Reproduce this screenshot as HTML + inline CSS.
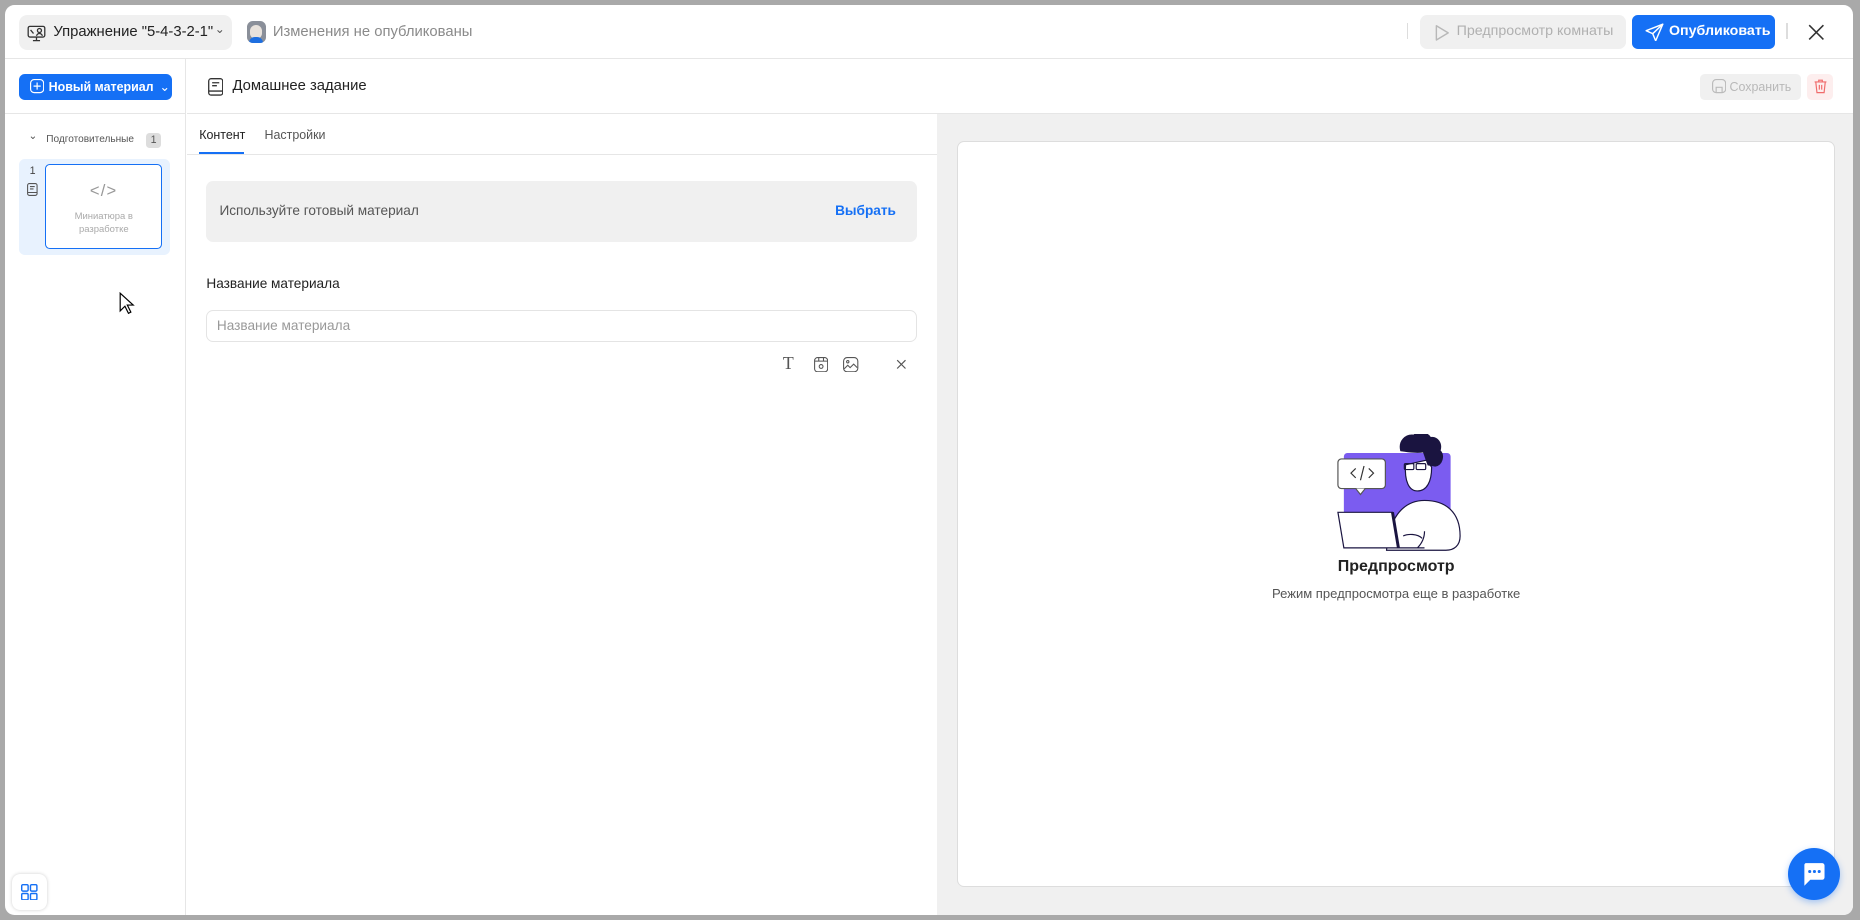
<!DOCTYPE html>
<html><head><meta charset="utf-8"><style>
*{box-sizing:border-box;margin:0;padding:0}
html,body{width:1860px;height:920px;overflow:hidden;background:#a9a9a9}
#root{zoom:1.18622;width:1568px;height:776px;position:relative;font-family:"Liberation Sans","Noto Sans CJK SC",sans-serif;color:#222}
#root div{white-space:nowrap}
.win{position:absolute;left:4px;top:4px;width:1558px;height:767px;background:#fff;border-radius:8px;overflow:hidden}
.abs{position:absolute}
.hdr{left:0;top:0;width:1558px;height:46px;border-bottom:1px solid #e6e6e6}
.pill{left:12px;top:9px;width:180px;height:29px;background:#f0f0f0;border-radius:7px;font-size:12.5px;line-height:29px;padding-left:29px}
.side{left:0;top:46px;width:153px;height:721px;border-right:1px solid #e6e6e6}
.btn{border-radius:5px;font-size:10.5px;font-weight:bold;color:#fff;background:#1570f5}
</style></head><body><div id="root">
<div class="win">
 <div class="abs hdr">
  <div class="abs pill">
   <svg class="abs" style="left:7px;top:7px" width="16" height="16" viewBox="0 0 16 16" fill="none" stroke="#333" stroke-width="1.1"><rect x="1" y="2" width="14" height="9" rx="1.5"/><path d="M8 11v3M5 14h6"/><circle cx="10.5" cy="5.5" r="1.7"/><path d="M8 10c.5-1.5 1.5-2 2.5-2s2 .5 2.5 2"/><path d="M3 5l2.5 3"/></svg>
   Упражнение "5-4-3-2-1"<span style="position:absolute;left:165px;top:-3px;font-size:10px;color:#555">⌄</span>
  </div>
  <div class="abs" style="left:204px;top:14px;width:16px;height:18px;border-radius:5px;background:#8a8f99;overflow:hidden"><div style="position:absolute;left:3px;top:3px;width:10px;height:12px;border-radius:5px;background:#e8e2dc"></div><div style="position:absolute;left:2px;top:13px;width:12px;height:6px;border-radius:5px 5px 0 0;background:#1e6fe0"></div></div>
  <div class="abs" style="left:226px;top:16px;font-size:12.5px;color:#8a8a8a">Изменения не опубликованы</div>
  <div class="abs" style="left:1182px;top:15px;width:1px;height:14px;background:#ddd"></div>
  <div class="abs" style="left:1193px;top:9px;width:174px;height:28px;background:#f0f0f0;border-radius:6px;font-size:12px;color:#b0b0b0;line-height:28px;padding-left:31px">Предпросмотр комнаты
   <svg class="abs" style="left:12px;top:7px" width="14" height="15" viewBox="0 0 14 15" fill="none" stroke="#b8b8b8" stroke-width="1.2"><path d="M2 1.5v12l10-6z" stroke-linejoin="round"/></svg></div>
  <div class="abs btn" style="left:1372px;top:9px;width:120px;height:28px;font-size:12px;line-height:28px;padding-left:31px">Опубликовать
   <svg class="abs" style="left:11px;top:6px" width="16" height="16" viewBox="0 0 16 16" fill="none" stroke="#fff" stroke-width="1.2" stroke-linejoin="round"><path d="M15 1L1 6.5l5.5 2.5L9 15z"/><path d="M6.5 9L15 1"/></svg></div>
  <div class="abs" style="left:1502px;top:15px;width:1px;height:14px;background:#ddd"></div>
  <svg class="abs" style="left:1520px;top:16px" width="14" height="14" viewBox="0 0 14 14" stroke="#333" stroke-width="1.3"><path d="M1 1l12 12M13 1L1 13"/></svg>
 </div>
 <div class="abs side">
  <div class="abs" style="left:0;top:45px;width:153px;height:1px;background:#e6e6e6"></div>
  <div class="abs btn" style="left:12px;top:12px;width:129px;height:22px;line-height:22px;padding-left:25px">Новый материал<span style="font-weight:normal;margin-left:5px">⌄</span>
   <svg class="abs" style="left:9px;top:5px" width="12" height="12" viewBox="0 0 12 12" fill="none" stroke="#fff" stroke-width="1"><rect x=".5" y=".5" width="11" height="11" rx="3"/><path d="M6 3v6M3 6h6"/></svg></div>
  <div class="abs" style="left:20px;top:59px;font-size:9px;color:#555">⌄</div>
  <div class="abs" style="left:35px;top:63px;font-size:8.5px;color:#555">Подготовительные</div>
  <div class="abs" style="left:119px;top:62px;width:13px;height:13px;border-radius:3px;background:#ddd;font-size:9px;text-align:center;line-height:13px;color:#555">1</div>
  <div class="abs" style="left:12px;top:84px;width:127px;height:81px;background:#e8f2fe;border-radius:5px"></div>
  <div class="abs" style="left:21px;top:89px;font-size:9px;color:#444">1</div>
  <svg class="abs" style="left:19px;top:104px" width="9" height="11" viewBox="0 0 9 11" fill="none" stroke="#555" stroke-width=".9"><rect x=".5" y=".5" width="8" height="10" rx="1.5"/><path d="M2.5 3h4M2.5 5h3M.5 8h8"/></svg>
  <div class="abs" style="left:34px;top:88px;width:99px;height:72px;border:1px solid #1570f5;border-radius:4px;background:#fff;text-align:center;font-size:8px;color:#aaa;line-height:11px;padding-top:38px">Миниатюра в<br>разработке
   <div class="abs" style="left:0;top:16px;width:97px;text-align:center;font-size:14px;color:#999;letter-spacing:1px">&lt;/&gt;</div></div>
  <svg class="abs" style="left:96px;top:196px" width="14" height="20" viewBox="0 0 14 20"><path d="M1 1v15l4-4 3 6 2-1-3-6h5z" fill="#fff" stroke="#000" stroke-width="1"/></svg>
  <div class="abs" style="left:6px;top:687px;width:30px;height:30px;border-radius:7px;background:#fff;box-shadow:0 0 3px rgba(0,0,0,.2)">
   <svg class="abs" style="left:8px;top:8px" width="14" height="14" viewBox="0 0 14 14" fill="none" stroke="#1570f5" stroke-width="1.2"><rect x=".6" y=".6" width="5.4" height="5.4" rx="1"/><rect x="8" y=".6" width="5.4" height="5.4" rx="1"/><rect x=".6" y="8" width="5.4" height="5.4" rx="1"/><rect x="8" y="8" width="5.4" height="5.4" rx="1"/></svg></div>
 </div>
 <div class="abs" style="left:154px;top:91px;width:1404px;height:1px;background:#e6e6e6"></div>
 <svg class="abs" style="left:171px;top:62px" width="13" height="15" viewBox="0 0 13 15" fill="none" stroke="#333" stroke-width="1.1"><rect x=".6" y=".6" width="11.8" height="13.8" rx="2"/><path d="M3.5 4h6M3.5 6.5h4M.6 11h11.8"/></svg>
 <div class="abs" style="left:192px;top:62px;font-size:12.5px;color:#222">Домашнее задание</div>
 <div class="abs" style="left:1429px;top:58px;width:85px;height:22px;border-radius:4px;background:#f0f0f0;font-size:10.5px;color:#b8b8b8;line-height:22px;padding-left:25px">Сохранить
  <svg class="abs" style="left:10px;top:5px" width="12" height="12" viewBox="0 0 12 12" fill="none" stroke="#bbb" stroke-width="1"><rect x=".5" y=".5" width="11" height="11" rx="3"/><path d="M3.5 11.5V7h5v4.5"/></svg></div>
 <div class="abs" style="left:1519px;top:58px;width:22px;height:22px;border-radius:4px;background:#fdeeee">
  <svg class="abs" style="left:6px;top:5px" width="11" height="12" viewBox="0 0 11 12" fill="none" stroke="#f06b6b" stroke-width="1"><path d="M.5 2.5h10M4 2.5V1h3v1.5M1.5 2.5l1 9h6l1-9M4.5 5v4M6.5 5v4"/></svg></div>
 <div class="abs" style="left:164px;top:104px;font-size:10.5px;color:#222">Контент</div>
 <div class="abs" style="left:164px;top:124px;width:38px;height:2px;background:#1570f5"></div>
 <div class="abs" style="left:219px;top:104px;font-size:10.5px;color:#555">Настройки</div>
 <div class="abs" style="left:154px;top:126px;width:632px;height:1px;background:#e6e6e6"></div>
 <div class="abs" style="left:170px;top:149px;width:599px;height:51px;border-radius:6px;background:#f0f0f0"></div>
 <div class="abs" style="left:181px;top:167px;font-size:11.5px;color:#555">Используйте готовый материал</div>
 <div class="abs" style="left:700px;top:167px;font-size:11.5px;color:#1570f5;font-weight:bold">Выбрать</div>
 <div class="abs" style="left:170px;top:229px;font-size:11.5px;color:#222">Название материала</div>
 <div class="abs" style="left:170px;top:257px;width:599px;height:27px;border:1px solid #e4e4e4;border-radius:6px;font-size:11.5px;color:#999;line-height:25px;padding-left:8px">Название материала</div>
 <div class="abs" style="left:656px;top:294px;font-size:15px;color:#555;font-family:'Liberation Serif',serif">T</div>
 <svg class="abs" style="left:682px;top:297px" width="12" height="13" viewBox="0 0 12 13" fill="none" stroke="#555" stroke-width=".9"><rect x=".5" y=".5" width="11" height="12" rx="2.5"/><path d="M.5 3.5h11M4 .5v3M8 .5v3"/><circle cx="6" cy="8" r="1.6"/></svg>
 <svg class="abs" style="left:707px;top:297px" width="13" height="13" viewBox="0 0 13 13" fill="none" stroke="#555" stroke-width=".9"><rect x=".5" y=".5" width="12" height="12" rx="3"/><circle cx="4" cy="4" r="1"/><path d="M1 10l3-3 2 2 3-3 3 3"/></svg>
 <svg class="abs" style="left:751px;top:299px" width="9" height="9" viewBox="0 0 9 9" stroke="#555" stroke-width="1"><path d="M1 1l7 7M8 1L1 8"/></svg>
 <div class="abs" style="left:786px;top:92px;width:772px;height:675px;background:#f0f0f0"></div>
 <div class="abs" style="left:803px;top:115px;width:740px;height:629px;background:#fff;border:1px solid #ddd;border-radius:6px"></div>
 <svg class="abs" style="left:1119px;top:362px" width="110" height="100" viewBox="0 0 110 100" fill="none" stroke="#1a1440" stroke-width="1">
  <rect x="10" y="16" width="90" height="60" rx="3" fill="#7b5cf0" stroke="none"/>
  <rect x="5" y="21" width="40" height="25" rx="3" fill="#fff" stroke="#555"/><path d="M20 46l4 5 4-5" fill="#fff" stroke="#555"/>
  <path d="M20 29l-4 4 4 4M31 29l4 4-4 4M27 27l-3 12" stroke="#333"/>
  <path d="M46 98c2-30 16-42 32-42 18 0 30 10 30 30 0 8-5 12-12 12z" fill="#fff"/>
  <path d="M62 26c-1 14 3 22 10 22 8 0 12-8 12-20l-4-6z" fill="#fff"/>
  <path d="M58 14c-2-8 4-14 11-13 3-3 11-3 14 2 6-1 10 5 8 11 4 4 2 12-4 13l-6-1c-2-5-3-9-4-11-5 1-12 0-19-1z" fill="#1a1440"/>
  <rect x="61" y="25" width="8" height="5" rx="1"/><rect x="71" y="25" width="8" height="5" rx="1"/>
  <path d="M5 66h46l5 30H10z" fill="#fff"/><path d="M51 66l5 30" stroke-width="2.5"/>
  <path d="M56 96h22M60 86c4-2 12-2 16 2M72 96c4-4 6-8 6-14"/>
 </svg>
 <div class="abs" style="left:1069px;top:466px;width:208px;text-align:center;font-size:13.5px;font-weight:bold;color:#222">Предпросмотр</div>
 <div class="abs" style="left:1023px;top:490px;width:300px;text-align:center;font-size:11px;color:#555">Режим предпросмотра еще в разработке</div>
</div>
<div class="abs" style="left:1507px;top:715px;width:44px;height:44px;border-radius:50%;background:#1570f5;box-shadow:0 2px 6px rgba(21,112,245,.35)">
 <svg class="abs" style="left:12px;top:12px" width="20" height="21" viewBox="0 0 20 21"><path d="M3 1h14a2 2 0 0 1 2 2v10a2 2 0 0 1-2 2H7l-5 5V3a2 2 0 0 1 1-2z" fill="#fff"/><circle cx="6.5" cy="8" r="1.3" fill="#1570f5"/><circle cx="10.5" cy="8" r="1.3" fill="#1570f5"/><circle cx="14.5" cy="8" r="1.3" fill="#1570f5"/></svg></div>
</div></body></html>
